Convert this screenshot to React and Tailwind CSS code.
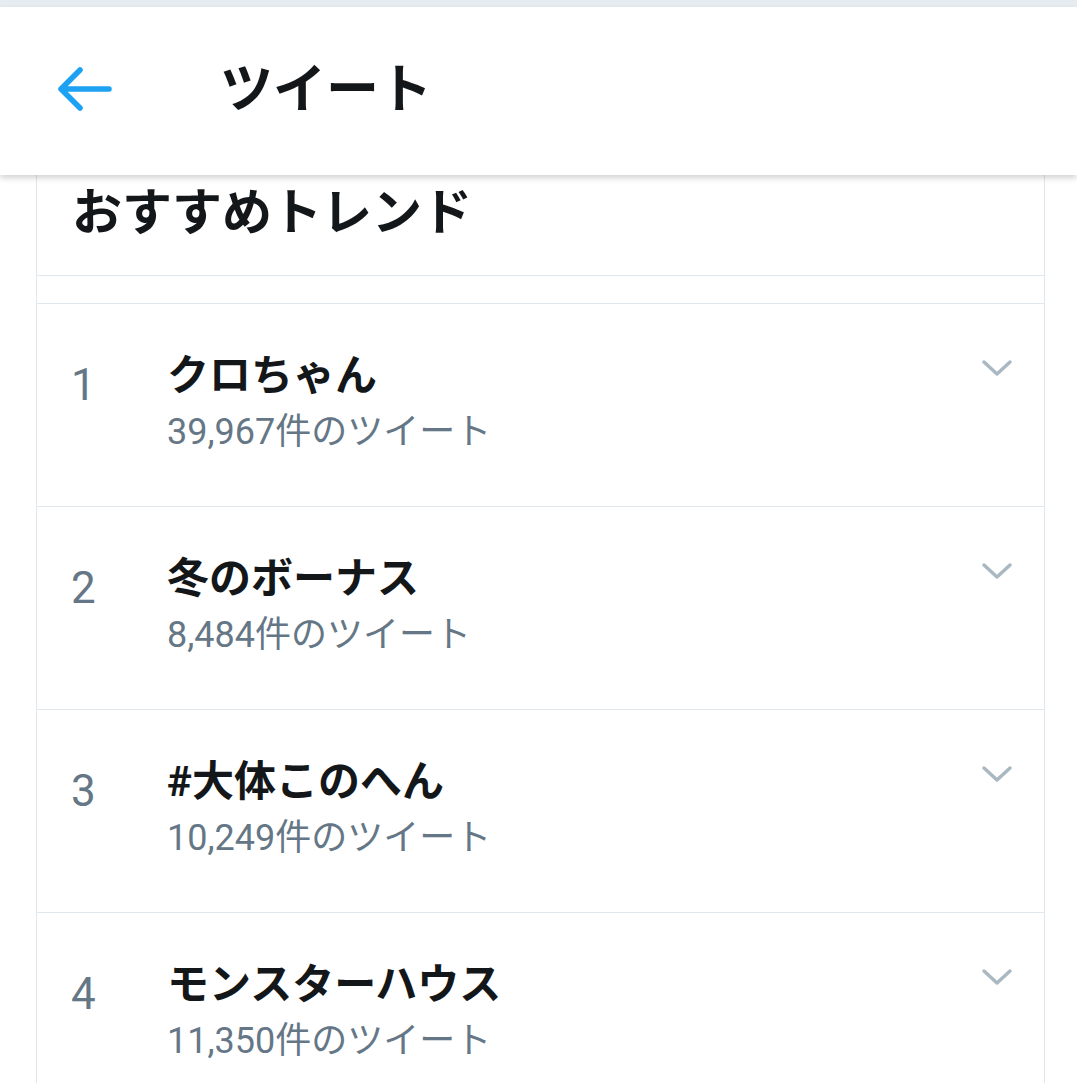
import React from "react";

const trends = [
  { rank: 1, name: "クロちゃん", count: "39,967件のツイート" },
  { rank: 2, name: "冬のボーナス", count: "8,484件のツイート" },
  { rank: 3, name: "#大体このへん", count: "10,249件のツイート" },
  { rank: 4, name: "モンスターハウス", count: "11,350件のツイート" },
];

const BackArrow = () => (
  <svg width="54" height="46" viewBox="0 0 54 46" fill="none">
    <path
      d="M51 23H4M22 4L3 23l19 19"
      stroke="#1da1f2"
      strokeWidth="5.5"
      strokeLinecap="round"
      strokeLinejoin="round"
    />
  </svg>
);

const Chevron = () => (
  <svg width="32" height="18" viewBox="0 0 32 18" fill="none">
    <path
      d="M3 3l13 12L29 3"
      stroke="#aab8c2"
      strokeWidth="3.5"
      strokeLinecap="round"
      strokeLinejoin="round"
    />
  </svg>
);

const TrendRow = ({ rank, name, count }) => (
  <div className="h-[203px] border-b border-[#e1e8ed] flex items-start">
    <div className="w-[130px] pl-[34px] pt-[56px] text-[44px] leading-[50px] text-[#657786]">
      {rank}
    </div>
    <div className="flex-1 pt-[47px]">
      <div className="text-[42px] leading-[50px] font-bold text-[#14171a]">
        {name}
      </div>
      <div className="mt-[9px] text-[36px] leading-[44px] text-[#657786]">
        {count}
      </div>
    </div>
    <div className="pt-[55px] pr-[31px]">
      <Chevron />
    </div>
  </div>
);

export default function App() {
  return (
    <div
      className="min-h-screen bg-white"
      style={{ fontFamily: 'Roboto, "Noto Sans CJK JP", sans-serif' }}
    >
      <div className="h-[7px] bg-[#e6ecf0]" />
      <header className="relative z-10 h-[168px] bg-white flex items-center shadow-[0_3px_6px_rgba(0,0,0,0.18)]">
        <div className="ml-[58px] mt-[-4px]">
          <BackArrow />
        </div>
        <h1 className="ml-[108px] mt-[-2px] text-[53px] leading-none font-bold text-[#14171a]">
          ツイート
        </h1>
      </header>

      <main className="ml-[36px] mr-[32px] border-x border-[#e1e8ed]">
        {/* Section heading */}
        <div className="h-[101px] border-b border-[#e1e8ed] pl-[35px] pt-[12px]">
          <h2 className="text-[50px] leading-[52px] font-bold text-[#14171a]">
            おすすめトレンド
          </h2>
        </div>
        <div className="h-[28px] border-b border-[#e1e8ed]" />

        {trends.map((t) => (
          <TrendRow key={t.rank} {...t} />
        ))}
      </main>
    </div>
  );
}
